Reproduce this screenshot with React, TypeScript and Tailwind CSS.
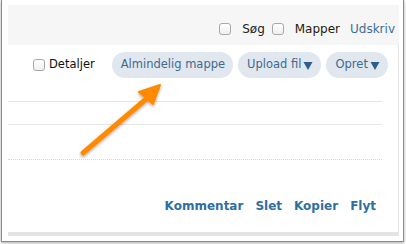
import React from 'react';

const font = { fontFamily: '"DejaVu Sans", Verdana, sans-serif' };

function Box() {
  return (
    <span className="inline-block w-[12px] h-[12px] rounded-[3px] border border-[#a8a8a8] bg-gradient-to-b from-white to-[#f0f0f0] shrink-0 align-middle" />
  );
}

function Pill({ label, caret }: { label: string; caret?: boolean }) {
  return (
    <span className="h-[26px] shrink-0 whitespace-nowrap rounded-full bg-[#e1e7ef] pl-[9px] pr-[8px] flex items-center text-[11.5px] text-[#3f6a8f]">
      {label}
      {caret && (
        <svg width="10" height="8" viewBox="0 0 10 8" className="ml-[2px] mt-[1px]">
          <path d="M0.5 0 H9.5 L5 8 Z" fill="#2d5f8c" />
        </svg>
      )}
    </span>
  );
}

export default function App() {
  return (
    <div className="w-[406px] h-[244px] bg-white relative overflow-hidden" style={font}>
      {/* frame */}
      <div className="ml-[1px] w-[403px] h-[242px] border-x border-b border-[#8c8c8c] shadow-[0_1px_3px_rgba(0,0,0,0.35)] pt-[5px] pl-[6px]">
        <div className="w-[391px]">
          {/* top bar */}
          <div className="h-[40px] bg-[#f6f6f6] flex items-center justify-end pr-[4px] pt-[8px] text-[12px] text-[#222] whitespace-nowrap">
            <Box />
            <span className="ml-[11px]">Søg</span>
            <span className="ml-[7px] flex"><Box /></span>
            <span className="ml-[11px] text-[#2a1a0c]">Mapper</span>
            <span className="ml-[10px] text-[#3a6d98]">Udskriv</span>
          </div>

          {/* body */}
          <div className="h-[187px] border-r border-[#e6e6e6] flex flex-col">
            <div className="mt-[7px] h-[26px] flex items-center text-[11.5px] whitespace-nowrap">
              <span className="ml-[25px] flex"><Box /></span>
              <span className="ml-[4px] text-[#111]">Detaljer</span>
              <div className="ml-[17px] flex gap-[5px]">
                <Pill label="Almindelig mappe" />
                <Pill label="Upload fil" caret />
                <Pill label="Opret" caret />
              </div>
            </div>
            <div className="mt-[23px] w-[374px] border-t border-[#e6e6e6]" />
            <div className="mt-[22px] w-[374px] border-t border-[#e6e6e6]" />
            <div className="mt-[34px] w-[374px] border-t border-dotted border-[#d8d8d8]" />
            <div className="mt-[37px] flex justify-end gap-[12px] pr-[22px] text-[12px] font-bold text-[#2f6f9f]">
              <span>Kommentar</span>
              <span>Slet</span>
              <span>Kopier</span>
              <span>Flyt</span>
            </div>
          </div>
          <div className="h-[4px] bg-[#e4e4e4]" />
        </div>
      </div>

      {/* arrow overlay */}
      <svg className="absolute left-0 top-0" width="406" height="244" viewBox="0 0 406 244">
        <defs>
          <filter id="sh" x="-20%" y="-20%" width="140%" height="140%">
            <feDropShadow dx="0" dy="1.5" stdDeviation="1.5" floodColor="#000" floodOpacity="0.35" />
          </filter>
        </defs>
        <g filter="url(#sh)">
          <line x1="83" y1="153" x2="145" y2="100" stroke="#ff8a00" strokeWidth="5" strokeLinecap="round" />
          <path d="M160 85 L139 92 L153 104 Z" fill="#ff8a00" stroke="#ff8a00" strokeWidth="2" strokeLinejoin="round" />
        </g>
      </svg>
    </div>
  );
}
